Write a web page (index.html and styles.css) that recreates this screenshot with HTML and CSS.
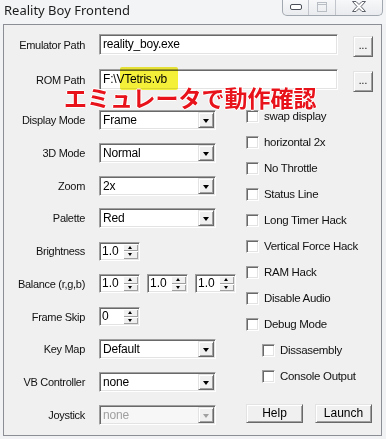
FILE: index.html
```html
<!DOCTYPE html>
<html lang="ja">
<head>
    <meta charset="UTF-8">
    <title>Reality Boy Frontend</title>
    <link rel="stylesheet" href="styles.css">
</head>
<body>
    <div class="window">
        <div class="titlebar">
            <span class="title">Reality Boy Frontend</span>
            <div class="caption">
                <span class="cap cap-min">
                    <svg width="12" height="6" viewBox="0 0 12 6"><rect x="0.5" y="0.5" width="11" height="5" rx="1.5" fill="#fff" stroke="#4a4f58"/></svg>
                </span>
                <span class="cap cap-max">
                    <svg width="10" height="10" viewBox="0 0 10 10"><rect x="0.5" y="0.5" width="9" height="9" fill="none" stroke="#b9bdc4"/><line x1="1" y1="2.5" x2="9" y2="2.5" stroke="#b9bdc4"/></svg>
                </span>
                <span class="cap cap-close">
                    <svg width="16" height="12" viewBox="0 0 16 12"><path d="M1.5 0.5 H5 L8 3.5 L11 0.5 H14.5 L10 5.5 L14.5 10.5 H11 L8 7.5 L5 10.5 H1.5 L6 5.5 Z" fill="#fff" stroke="#5c6169"/></svg>
                </span>
            </div>
        </div>

        <div class="client">
            <div class="path-row">
                <label>Emulator Path</label>
                <div class="edit path-edit">reality_boy.exe</div>
                <div class="btn dots">...</div>
            </div>
            <div class="path-row rom-row">
                <label>ROM Path</label>
                <div class="edit path-edit">F:\VTetris.vb</div>
                <div class="btn dots">...</div>
            </div>

            <div class="main">
                <div class="left">
                    <div class="row"><label>Display Mode</label><div class="combo"><span>Frame</span><i class="drop"></i></div></div>
                    <div class="row"><label>3D Mode</label><div class="combo"><span>Normal</span><i class="drop"></i></div></div>
                    <div class="row"><label>Zoom</label><div class="combo"><span>2x</span><i class="drop"></i></div></div>
                    <div class="row"><label>Palette</label><div class="combo"><span>Red</span><i class="drop"></i></div></div>
                    <div class="row"><label>Brightness</label>
                        <div class="spin"><span>1.0</span><i class="updown"><b class="up"></b><b class="down"></b></i></div>
                    </div>
                    <div class="row"><label>Balance (r,g,b)</label>
                        <div class="spins">
                            <div class="spin"><span>1.0</span><i class="updown"><b class="up"></b><b class="down"></b></i></div>
                            <div class="spin"><span>1.0</span><i class="updown"><b class="up"></b><b class="down"></b></i></div>
                            <div class="spin"><span>1.0</span><i class="updown"><b class="up"></b><b class="down"></b></i></div>
                        </div>
                    </div>
                    <div class="row"><label>Frame Skip</label>
                        <div class="spin"><span>0</span><i class="updown"><b class="up"></b><b class="down"></b></i></div>
                    </div>
                    <div class="row"><label>Key Map</label><div class="combo"><span>Default</span><i class="drop"></i></div></div>
                    <div class="row"><label>VB Controller</label><div class="combo"><span>none</span><i class="drop"></i></div></div>
                    <div class="row"><label>Joystick</label><div class="combo disabled"><span>none</span><i class="drop"></i></div></div>
                </div>

                <div class="right">
                    <div class="check"><i class="box"></i>swap display</div>
                    <div class="check"><i class="box"></i>horizontal 2x</div>
                    <div class="check"><i class="box"></i>No Throttle</div>
                    <div class="check"><i class="box"></i>Status Line</div>
                    <div class="check"><i class="box"></i>Long Timer Hack</div>
                    <div class="check"><i class="box"></i>Vertical Force Hack</div>
                    <div class="check"><i class="box"></i>RAM Hack</div>
                    <div class="check"><i class="box"></i>Disable Audio</div>
                    <div class="check"><i class="box"></i>Debug Mode</div>
                    <div class="check sub"><i class="box"></i>Dissasembly</div>
                    <div class="check sub"><i class="box"></i>Console Output</div>
                    <div class="buttons">
                        <div class="btn push">Help</div>
                        <div class="btn push">Launch</div>
                    </div>
                </div>
            </div>

            <!-- annotation pasted over the screenshot -->
            <div class="marker"></div>
            <div class="note">エミュレータで動作確認</div>
        </div>
    </div>
</body>
</html>
```

FILE: styles.css
```css
body {
    margin: 0;
    padding: 0;
    background-color: #f1f2f4;
    font-family: "Liberation Sans", Arial, sans-serif;
    font-size: 11px;
    color: #000;
}
.window {
    width: 386px;
    height: 439px;
    overflow: hidden;
}
.titlebar {
    height: 24px;
    position: relative;
    background-color: #f3f4f6;
}
.titlebar .title {
    position: absolute;
    left: 4px;
    top: 1px;
    font-family: "Noto Sans", sans-serif;
    font-size: 13px;
    line-height: 18px;
    color: #1c1c1c;
}
.caption {
    position: absolute;
    left: 282px;
    top: -4px;
    display: flex;
    height: 19px;
    border: 1px solid #a2a8b0;
    border-top: none;
    border-radius: 0 0 5px 5px;
    background: linear-gradient(#fbfbfc, #e9ebee);
    overflow: hidden;
}
.cap {
    display: flex;
    align-items: center;
    justify-content: center;
    height: 19px;
    padding-top: 2px;
    box-sizing: border-box;
}
.cap-min {
    width: 26px;
    border-right: 1px solid #c2c6cc;
}
.cap-max {
    width: 27px;
    border-right: 1px solid #c2c6cc;
}
.cap-close {
    width: 46px;
}

.client {
    position: relative;
    margin-left: 3px;
    width: 379px;
    height: 412px;
    box-sizing: border-box;
    border: 1px solid #8b8e94;
    background-color: #f0f0f0;
    padding: 9px 0 0 0;
}
label {
    display: block;
    width: 81px;
    text-align: right;
    margin-right: 14px;
    white-space: nowrap;
    letter-spacing: -0.3px;
    color: #111;
}
.path-row {
    display: flex;
    align-items: center;
    height: 21px;
}
.rom-row {
    margin-top: 14px;
}
.edit {
    box-sizing: border-box;
    background-color: #fff;
    border: 1px solid;
    border-color: #a0a0a0 #fff #fff #a0a0a0;
    box-shadow: inset 1px 1px 0 #696969, inset -1px -1px 0 #e3e3e3;
    padding: 0 3px;
    white-space: nowrap;
}
.path-edit {
    width: 239px;
    height: 21px;
    line-height: 19px;
    font-size: 12px;
    letter-spacing: -0.2px;
}
.btn {
    box-sizing: border-box;
    background-color: #f0f0f0;
    border: 1px solid;
    border-color: #e3e3e3 #696969 #696969 #e3e3e3;
    box-shadow: inset 1px 1px 0 #fff, inset -1px -1px 0 #a0a0a0;
    text-align: center;
}
.dots {
    width: 20px;
    height: 21px;
    margin-left: 15px;
    margin-top: 3px;
    line-height: 17px;
    font-size: 10px;
}

.main {
    display: flex;
    margin-top: 20px;
}
.left {
    width: 242px;
    display: flex;
    flex-direction: column;
    gap: 12.75px;
}
.row {
    display: flex;
    align-items: center;
    height: 20px;
}
.combo {
    position: relative;
    width: 117px;
    height: 20px;
    box-sizing: border-box;
    background-color: #fff;
    border: 1px solid;
    border-color: #a0a0a0 #fff #fff #a0a0a0;
    box-shadow: inset 1px 1px 0 #696969, inset -1px -1px 0 #e3e3e3;
    font-size: 12px;
    line-height: 18px;
    padding-left: 3px;
    letter-spacing: -0.2px;
}
.drop {
    position: absolute;
    right: 1px;
    top: 1px;
    width: 16px;
    height: 16px;
    box-sizing: border-box;
    background-color: #f0f0f0;
    border: 1px solid;
    border-color: #e3e3e3 #696969 #696969 #e3e3e3;
    box-shadow: inset 1px 1px 0 #fff, inset -1px -1px 0 #a0a0a0;
}
.drop::after {
    content: "";
    position: absolute;
    left: 4px;
    top: 6px;
    border-left: 3.5px solid transparent;
    border-right: 3.5px solid transparent;
    border-top: 4px solid #000;
}
.combo.disabled {
    background-color: #f7f7f7;
    color: #a0a0a0;
}
.combo.disabled .drop::after {
    border-top-color: #a0a0a0;
}
.spins {
    display: flex;
    gap: 7px;
}
.spin {
    position: relative;
    width: 41px;
    height: 19px;
    box-sizing: border-box;
    background-color: #fff;
    border: 1px solid;
    border-color: #a0a0a0 #fff #fff #a0a0a0;
    box-shadow: inset 1px 1px 0 #696969, inset -1px -1px 0 #e3e3e3;
    font-size: 12px;
    line-height: 17px;
    padding-left: 2px;
}
.updown {
    position: absolute;
    right: 1px;
    top: 1px;
    width: 15px;
    height: 15px;
    display: flex;
    flex-direction: column;
}
.updown b {
    position: relative;
    flex: 1;
    background-color: #f0f0f0;
    box-shadow: inset 1px 1px 0 #fff, inset -1px -1px 0 #a0a0a0;
}
.updown b::after {
    content: "";
    position: absolute;
    left: 5px;
    border-left: 2.5px solid transparent;
    border-right: 2.5px solid transparent;
}
.updown .up::after {
    top: 2px;
    border-bottom: 3px solid #000;
}
.updown .down::after {
    top: 2px;
    border-top: 3px solid #000;
}

.right {
    display: flex;
    flex-direction: column;
    gap: 13px;
}
.check {
    display: flex;
    align-items: center;
    height: 13px;
    line-height: 13px;
    font-size: 11.5px;
    letter-spacing: -0.3px;
    white-space: nowrap;
    color: #111;
}
.check.sub {
    margin-left: 16px;
}
.box {
    width: 13px;
    height: 13px;
    box-sizing: border-box;
    margin-right: 5px;
    background-color: #fff;
    border: 1px solid;
    border-color: #a0a0a0 #fff #fff #a0a0a0;
    box-shadow: inset 1px 1px 0 #696969, inset -1px -1px 0 #e3e3e3;
}
.buttons {
    display: flex;
    gap: 12px;
    margin-top: 8px;
}
.push {
    width: 57px;
    height: 19px;
    line-height: 17px;
    font-size: 12px;
}

.marker {
    position: absolute;
    left: 116px;
    top: 42px;
    width: 58px;
    height: 23px;
    background-color: #f4f03a;
    mix-blend-mode: multiply;
    border-radius: 2px;
}
.note {
    position: absolute;
    left: 60px;
    top: 58px;
    font-family: "Noto Sans CJK JP", sans-serif;
    font-weight: 700;
    font-size: 23px;
    line-height: 28px;
    color: #e8121a;
    text-shadow: 1px 0 0 #fff, -1px 0 0 #fff, 0 1px 0 #fff, 0 -1px 0 #fff;
    white-space: nowrap;
}
```
